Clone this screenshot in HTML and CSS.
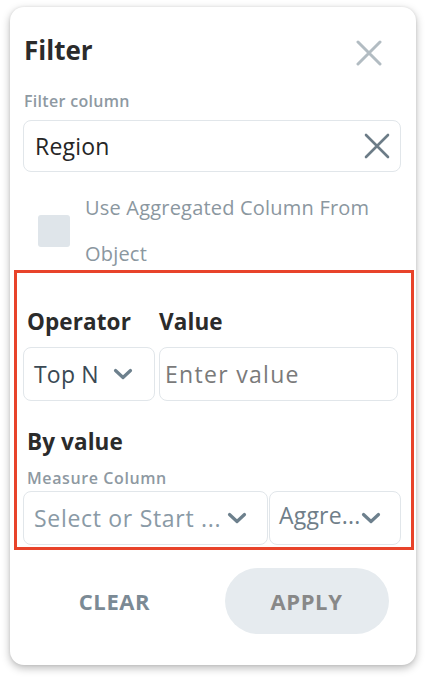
FILE: index.html
```html
<!DOCTYPE html>
<html lang="en">
<head>
<meta charset="utf-8">
<title>Filter</title>
<link rel="stylesheet" href="styles.css">
</head>
<body>
<div class="card">
  <div class="header">
    <h1 class="title">Filter</h1>
    <button class="close" aria-label="Close">
      <svg width="26" height="26" viewBox="0 0 26 26"><path d="M2 2 L24 24 M24 2 L2 24" stroke="currentColor" stroke-width="3" stroke-linecap="round" fill="none"/></svg>
    </button>
  </div>
  <div class="label">Filter column</div>
  <div class="input region">
    <span class="input-text">Region</span>
    <svg class="clear-x" width="26" height="26" viewBox="0 0 26 26"><path d="M2 2 L24 24 M24 2 L2 24" stroke="currentColor" stroke-width="2.6" stroke-linecap="round" fill="none"/></svg>
  </div>
  <div class="check-row">
    <span class="checkbox"></span>
    <span class="check-text">Use Aggregated Column From Object</span>
  </div>
  <section class="highlight">
    <div class="op-labels">
      <div class="sec-label op-label">Operator</div>
      <div class="sec-label val-label">Value</div>
    </div>
    <div class="op-row">
      <div class="input select op-select">
        <span class="op-text">Top N</span>
        <svg class="chev" width="20" height="12" viewBox="0 0 20 12"><path d="M2.5 2.5 L10 9.5 L17.5 2.5" stroke="currentColor" stroke-width="3.2" stroke-linecap="round" stroke-linejoin="round" fill="none"/></svg>
      </div>
      <div class="input value-input">
        <span class="placeholder">Enter value</span>
      </div>
    </div>
    <div class="sec-label by-label">By value</div>
    <div class="label measure-label">Measure Column</div>
    <div class="measure-row">
      <div class="input select measure-select">
        <span class="measure-text">Select or Start ...</span>
        <svg class="chev" width="20" height="12" viewBox="0 0 20 12"><path d="M2.5 2.5 L10 9.5 L17.5 2.5" stroke="currentColor" stroke-width="3.2" stroke-linecap="round" stroke-linejoin="round" fill="none"/></svg>
      </div>
      <div class="input select agg-select">
        <span class="agg-text">Aggre...</span>
        <svg class="chev" width="20" height="12" viewBox="0 0 20 12"><path d="M2.5 2.5 L10 9.5 L17.5 2.5" stroke="currentColor" stroke-width="3.2" stroke-linecap="round" stroke-linejoin="round" fill="none"/></svg>
      </div>
    </div>
  </section>
  <div class="actions">
    <button class="btn btn-clear">CLEAR</button>
    <button class="btn btn-apply">APPLY</button>
  </div>
</div>
</body>
</html>
```

FILE: styles.css
```css
* { box-sizing: border-box; }
html, body { margin: 0; padding: 0; background: #ffffff; }
body {
  font-family: "Open Sans", "Noto Sans", sans-serif;
  width: 428px;
  height: 680px;
  overflow: hidden;
}
.card {
  margin: 7px 0 0 10px;
  width: 406px;
  height: 658px;
  background: #fff;
  border-radius: 14px;
  box-shadow: 0 3px 8px rgba(0,0,0,0.28), 0 0 3px rgba(0,0,0,0.08);
  padding: 23px 15px 31px 13px;
  display: flex;
  flex-direction: column;
}
.header {
  display: flex;
  align-items: center;
  justify-content: space-between;
  height: 40px;
}
.title {
  margin: 0 0 0 1px;
  font-size: 26px;
  font-weight: 700;
  color: #2b2b2b;
  line-height: 40px;
}
.close {
  border: 0;
  background: none;
  padding: 0;
  margin: 6px 19px 0 0;
  color: #b2bcc2;
  width: 26px;
  height: 26px;
  display: flex;
}
.label {
  font-size: 16px;
  font-weight: 600;
  color: #8e99a2;
  line-height: 20px;
  letter-spacing: 0.3px;
  margin: 21px 0 0 1px;
}
.input {
  border: 1px solid #e1e6ea;
  border-radius: 8px;
  height: 54px;
  display: flex;
  align-items: center;
  background: #fff;
}
.region {
  margin-top: 9px;
  height: 52px;
  padding: 0 10px 0 11px;
  justify-content: space-between;
}
.input-text {
  font-size: 23px;
  color: #262626;
  letter-spacing: 0.2px;
}
.clear-x { color: #6c7c87; }
.check-row {
  display: flex;
  align-items: center;
  margin-top: 13px;
  padding-left: 15px;
}
.checkbox {
  flex: none;
  width: 32px;
  height: 32px;
  border-radius: 3px;
  background: #dfe5ea;
  margin-right: 15px;
}
.check-text {
  font-size: 20px;
  line-height: 46px;
  color: #8b979f;
  letter-spacing: 0.2px;
}
.highlight {
  border: 3px solid #e8432a;
  margin: -7px -13px 0 -9px;
  padding: 34px 0 2px 6px;
}
.sec-label {
  font-size: 22.5px;
  font-weight: 700;
  color: #2b2b2b;
  line-height: 30px;
  letter-spacing: 0.1px;
}
.op-labels {
  display: flex;
}
.op-label { width: 136px; padding-left: 4px; }
.op-row {
  display: flex;
  gap: 4px;
  margin-top: 10px;
}
.op-select {
  width: 132px;
  padding: 0 21px 0 10px;
  justify-content: space-between;
}
.op-text { font-size: 23px; color: #3a4954; letter-spacing: 0.2px; }
.chev { color: #6d808d; flex: none; }
.value-input {
  width: 239px;
  padding-left: 5px;
}
.placeholder { font-size: 23px; color: #7a7a7a; letter-spacing: 1.3px; }
.by-label { margin-top: 26px; padding-left: 4px; }
.measure-label { margin: 11px 0 0 4px; letter-spacing: 0.6px; }
.measure-row {
  display: flex;
  gap: 1px;
  margin-top: 3px;
}
.measure-select {
  width: 245px;
  padding: 0 20px 0 10px;
  justify-content: space-between;
}
.measure-text { font-size: 23px; color: #8a9aa6; letter-spacing: 0.7px; white-space: nowrap; }
.agg-select {
  width: 132px;
  padding: 0 19px 0 9px;
  justify-content: space-between;
}
.agg-text { font-size: 23px; color: #6f7e89; margin-top: -6px; letter-spacing: 0.2px; }
.actions {
  margin-top: 18px;
  display: grid;
  grid-template-columns: 1fr 1fr;
  align-items: center;
}
.btn {
  font-family: "Open Sans", "Noto Sans", sans-serif;
  font-size: 22px;
  font-weight: 700;
  border: 0;
  background: none;
  padding: 0;
  height: 66px;
  letter-spacing: 0.6px;
}
.btn-clear {
  color: #7b8a95;
  justify-self: center;
  margin-left: -6px;
}
.btn-apply {
  justify-self: center;
  width: 164px;
  border-radius: 33px;
  background: #e6ebef;
  color: #888888;
}
```
